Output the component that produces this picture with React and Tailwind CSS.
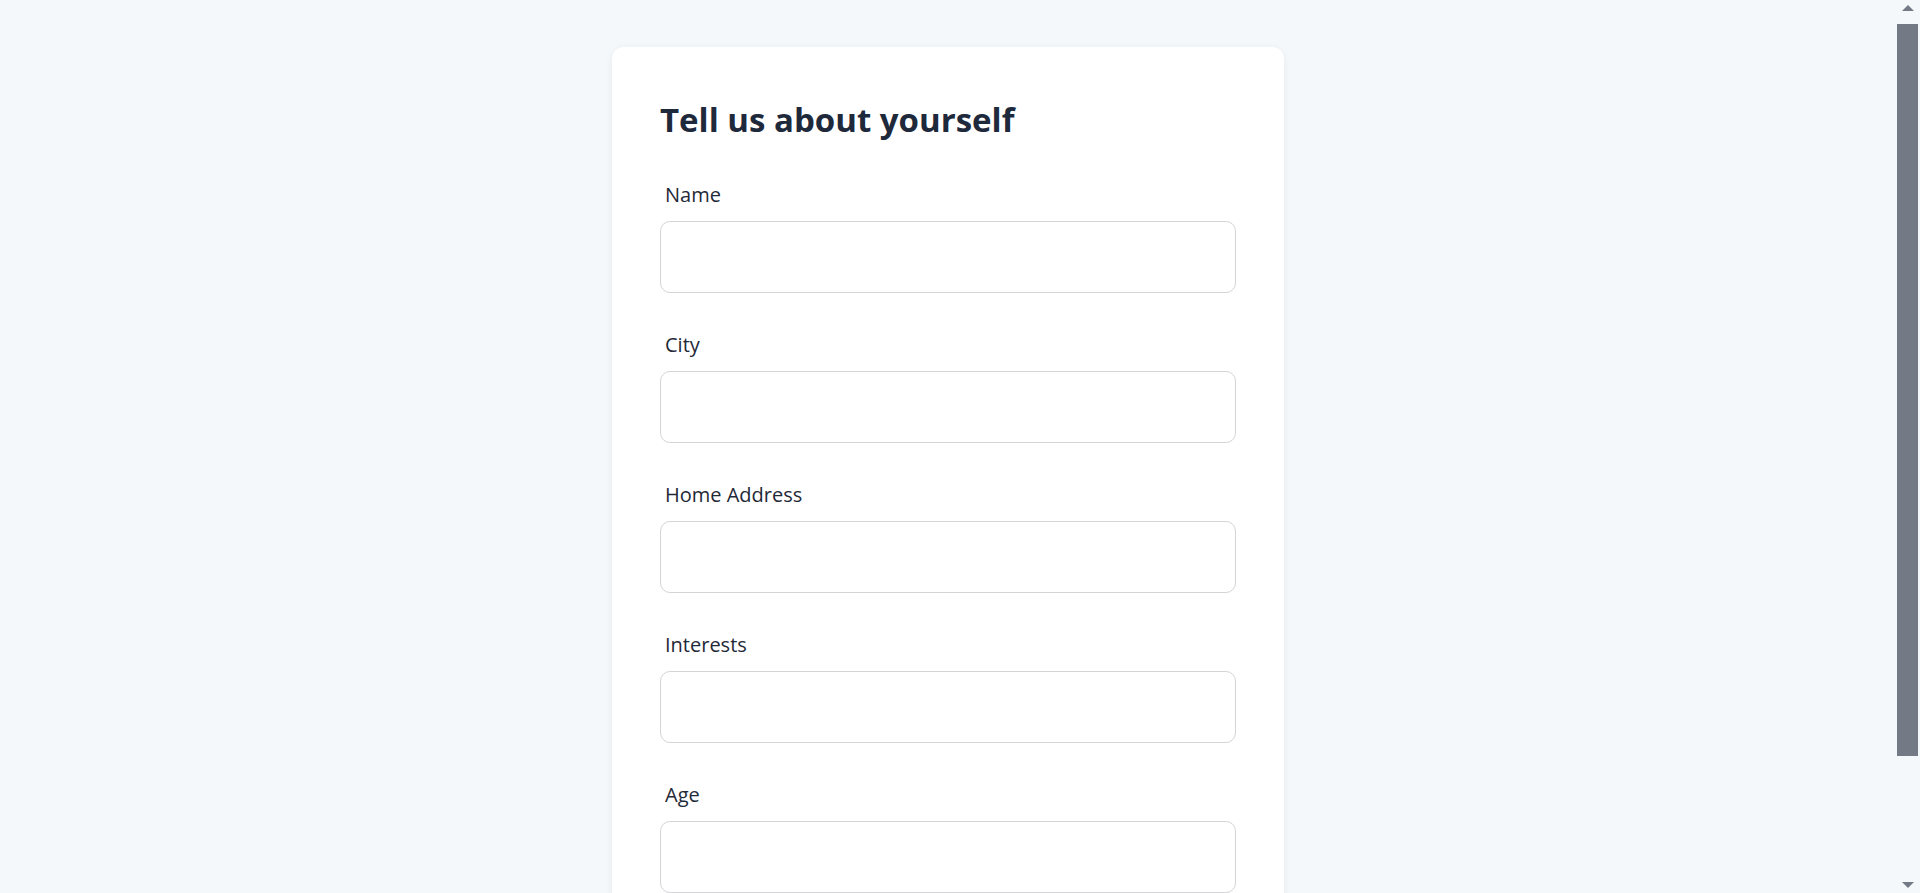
import React from 'react';

const FIELDS = ['Name', 'City', 'Home Address', 'Interests', 'Age'];

const Field = ({ label }) => (
  <div className="flex flex-col">
    <label className="pl-[5px] text-[20px] leading-[28px] text-[#1f2937] mb-3">{label}</label>
    <input
      type="text"
      className="h-[72px] w-full rounded-[10px] border border-[#d4d4d8] bg-white px-4 text-[18px] text-[#1f2937] outline-none"
    />
  </div>
);

// window scrollbar as seen in the screenshot
const FakeScrollbar = () => (
  <div className="fixed top-0 right-0 flex h-screen w-[24px] flex-col items-center bg-[#f5f8fb]">
    <svg width="14" height="24" viewBox="0 0 14 24" className="shrink-0">
      <path d="M1 11 L7 5 L13 11 Z" fill="#737a85" />
    </svg>
    <div className="ml-[-2px] w-[21px] h-[732px] bg-[#737a85]" />
    <div className="flex-1" />
    <svg width="14" height="24" viewBox="0 0 14 24" className="shrink-0">
      <path d="M1 13 L7 19 L13 13 Z" fill="#737a85" />
    </svg>
  </div>
);

export default function App() {
  return (
    <div
      className="min-h-screen bg-[#f5f8fb] pt-[47px] pb-[90px] pr-[24px]"
      style={{ fontFamily: '"Open Sans", "Noto Sans", Arial, sans-serif' }}
    >
      <div className="mx-auto w-[672px] rounded-xl bg-white px-12 pt-[53px] pb-12 shadow-[0_2px_10px_rgba(15,23,42,0.06)]">
        <h1 className="mb-[41px] text-[33px] leading-[40px] font-bold text-[#1e293b]">Tell us about yourself</h1>
        <form className="flex flex-col gap-[38px]">
          {FIELDS.map((f) => (
            <Field key={f} label={f} />
          ))}
        </form>
      </div>
      <FakeScrollbar />
    </div>
  );
}
